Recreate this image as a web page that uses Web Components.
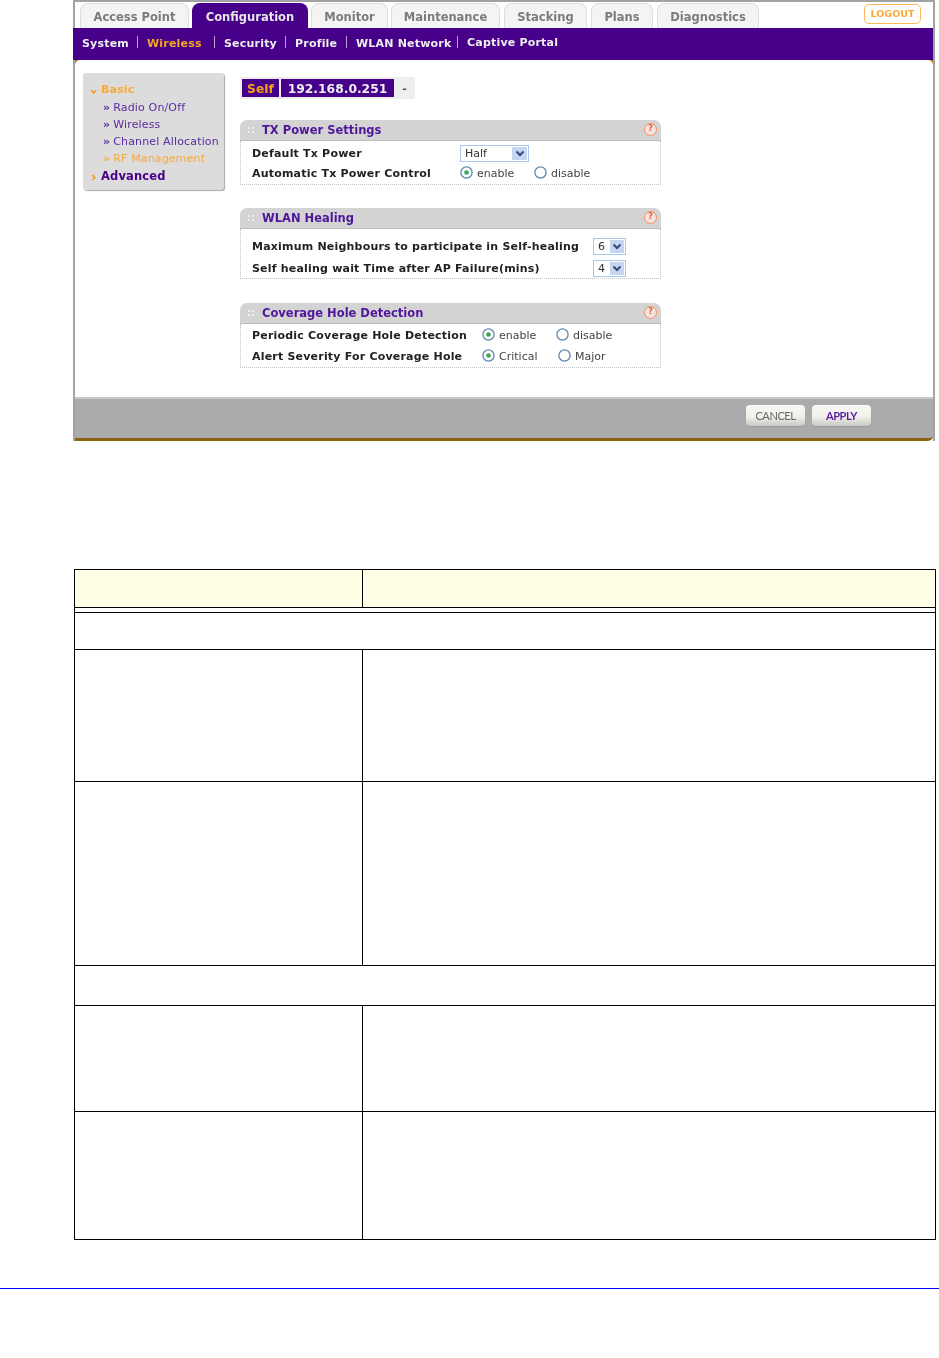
<!DOCTYPE html>
<html>
<head>
<meta charset="utf-8">
<title>RF Management</title>
<style>
  html, body { margin: 0; padding: 0; background: #fff; }
  body { font-family: "DejaVu Sans", Verdana, sans-serif; }
</style>
</head>
<body>
<manual-page>
  <shot-frame>
    <side-menu slot="side"></side-menu>
    <ip-picker></ip-picker>
    <net-panel title="TX Power Settings" style="--body:44px; margin-top:21px">
      <net-row label="Default Tx Power" style="--lw:208px; height:24px">
        <net-select value="Half" style="--w:69px; --field:50px"></net-select>
      </net-row>
      <net-row label="Automatic Tx Power Control" style="--lw:208px; height:16px">
        <net-radio checked style="width:74px">enable</net-radio>
        <net-radio>disable</net-radio>
      </net-row>
    </net-panel>
    <net-panel title="WLAN Healing" style="--body:50px; --pad:5px; margin-top:23px">
      <net-row label="Maximum Neighbours to participate in Self-healing" style="--lw:341px; height:24px">
        <net-select value="6" style="--w:33px; --field:15px"></net-select>
      </net-row>
      <net-row label="Self healing wait Time after AP Failure(mins)" style="--lw:341px; height:20px">
        <net-select value="4" style="--w:33px; --field:15px"></net-select>
      </net-row>
    </net-panel>
    <net-panel title="Coverage Hole Detection" style="--body:44px; margin-top:24px">
      <net-row label="Periodic Coverage Hole Detection" style="--lw:230px; height:23px">
        <net-radio checked style="width:74px">enable</net-radio>
        <net-radio>disable</net-radio>
      </net-row>
      <net-row label="Alert Severity For Coverage Hole" style="--lw:230px; height:18px">
        <net-radio checked style="width:76px">Critical</net-radio>
        <net-radio>Major</net-radio>
      </net-row>
    </net-panel>
  </shot-frame>
  <doc-table></doc-table>
</manual-page>

<script>
const chevron = (c) => `<svg width="10" height="7" viewBox="0 0 10 7"><path d="M1.5 1.5 L5 5 L8.5 1.5" fill="none" stroke="${c}" stroke-width="2"/></svg>`;

class ManualPage extends HTMLElement {
  constructor() {
    super();
    this.attachShadow({ mode: "open" }).innerHTML = `
    <style>
      :host { display: block; width: 939px; height: 1358px; overflow: hidden; }
      .rule { height: 1px; background: #0000ff; margin-top: 48px; }
    </style>
    <slot></slot>
    <div class="rule"></div>`;
  }
}

class ShotFrame extends HTMLElement {
  constructor() {
    super();
    this.attachShadow({ mode: "open" }).innerHTML = `
    <style>
      :host { display: block; width: 862px; height: 441px; margin-left: 73px; box-sizing: border-box;
        border: solid #a2a2a2; border-width: 2px 2px 0 2px; background: #fff; filter: blur(.35px);
        font-family: "DejaVu Sans", Verdana, sans-serif; }
      .tabs { height: 26px; display: flex; align-items: flex-end; padding-left: 5px; position: relative; }
      .logout { position: absolute; left: 789px; top: 2px; width: 57px; height: 20px; box-sizing: border-box;
        border: 1.5px solid #fbb65a; border-radius: 5px; color: #f9a93c; font: bold 9.5px/18px "DejaVu Sans", sans-serif;
        text-align: center; }
      nav { height: 32px; background: #46008a; display: flex; align-items: center; margin-left: -2px; padding-left: 9px; padding-bottom: 2px; box-sizing: border-box;
        font: bold 11px "DejaVu Sans", sans-serif; letter-spacing: .2px; color: #eee; white-space: nowrap; }
      nav span { display: block; }
      nav i { display: block; width: 1px; height: 12px; background: #b9a3d6; margin-top: -3px; }
      .on { color: #f7a51d; }
      .under { background: #a8760f; height: 337px; }
      .content { background: #fff; height: 337px; border-radius: 5px 5px 0 0; box-sizing: border-box;
        display: flex; padding: 13px 0 0 8px; gap: 16px; }
      .main { width: 421px; padding-top: 4px; }
      .foot { height: 44px; box-sizing: border-box; background: #ababab; border-top: 2px solid #c8c8c8; border-bottom: 3px solid #8a6410;
        border-radius: 0 0 5px 0; display: flex; justify-content: flex-end; gap: 7px; padding: 6px 62px 0 0; }
      button { width: 59px; height: 21px; border: 0; padding: 0; border-radius: 4px;
        background: linear-gradient(#f8f8f4, #f1f0ea 55%, #c9c8c2); box-shadow: 0 1px 1px #999;
        font: 11px "Lato", sans-serif; letter-spacing: -.4px; color: #666; }
      button.apply { color: #5a1ea0; font-weight: bold; }
    </style>
    <div class="tabs">
      <net-tab style="width:109px">Access Point</net-tab>
      <net-tab active style="width:116px;margin-left:3px">Configuration</net-tab>
      <net-tab style="width:77px;margin-left:3px">Monitor</net-tab>
      <net-tab style="width:109px;margin-left:3px">Maintenance</net-tab>
      <net-tab style="width:83px;margin-left:4px">Stacking</net-tab>
      <net-tab style="width:62px;margin-left:4px">Plans</net-tab>
      <net-tab style="width:102px;margin-left:4px">Diagnostics</net-tab>
      <div class="logout">LOGOUT</div>
    </div>
    <nav>
      <span style="width:55px">System</span><i></i>
      <span class="on" style="width:67px;margin-left:9px">Wireless</span><i></i>
      <span style="width:61px;margin-left:9px">Security</span><i></i>
      <span style="width:51px;margin-left:9px">Profile</span><i></i>
      <span style="width:101px;margin-left:9px">WLAN Network</span><i></i>
      <span style="margin-left:9px;margin-top:-2px">Captive Portal</span>
    </nav>
    <div class="under"><div class="content">
      <slot name="side"></slot>
      <div class="main"><slot></slot></div>
    </div></div>
    <div class="foot"><button>CANCEL</button><button class="apply">APPLY</button></div>`;
  }
}

class NetTab extends HTMLElement {
  constructor() {
    super();
    this.attachShadow({ mode: "open" }).innerHTML = `
    <style>
      :host { display: block; height: 25px; box-sizing: border-box; border-radius: 8px 8px 0 0;
        background: #f4f4f4; border: 1px solid #dedede; border-bottom: 0; color: #7b7b7b;
        font: bold 11.5px/26px "DejaVu Sans", sans-serif; text-align: center; }
      :host([active]) { background: #46008a; border-color: #46008a; color: #e6e6e6; }
    </style><slot></slot>`;
  }
}

class SideMenu extends HTMLElement {
  constructor() {
    super();
    this.attachShadow({ mode: "open" }).innerHTML = `
    <style>
      :host { display: block; width: 141px; height: 117px; box-sizing: border-box; background: #dcdcdc;
        border-radius: 3px; box-shadow: 1px 1px 1px #aaa; padding-top: 8px; color: #5a2aa0;
        font: 11px/17px "DejaVu Sans", sans-serif; letter-spacing: .15px; white-space: nowrap; }
      .head { font-weight: bold; padding-left: 18px; position: relative; height: 18px; }
      .head svg { position: absolute; left: 7px; top: 7px; }
      .item { padding-left: 20px; }
      .item::before { content: "\\00bb"; margin-right: 3px; font-weight: bold; }
      .or { color: #f7a93a; }
      .dk { color: #46008a; font-size: 11.5px; line-height: 19px; }
    </style>
    <div class="head or"><svg width="7" height="7" viewBox="0 0 7 7"><path d="M1 2 L3.5 5 L6 2" fill="none" stroke="#f39a1c" stroke-width="1.5"/></svg>Basic</div>
    <div class="item">Radio On/Off</div>
    <div class="item">Wireless</div>
    <div class="item">Channel Allocation</div>
    <div class="item or">RF Management</div>
    <div class="head dk"><svg width="7" height="7" viewBox="0 0 7 7"><path d="M2 1 L5 3.5 L2 6" fill="none" stroke="#f39a1c" stroke-width="1.5"/></svg>Advanced</div>`;
  }
}

class IpPicker extends HTMLElement {
  constructor() {
    super();
    this.attachShadow({ mode: "open" }).innerHTML = `
    <style>
      :host { display: flex; width: 175px; height: 22px; box-sizing: border-box; background: #eeeeee; padding: 2px 0 0 2px;
        font: bold 12.3px/20px "DejaVu Sans", sans-serif; color: #efefef; }
      div { height: 18px; background: #46008a; text-align: center; }
      .self { width: 37px; color: #f5a01a; margin-right: 2px; }
      .ip { width: 113px; }
      .dash { width: 21px; background: none; color: #555; font-size: 11px; }
    </style>
    <div class="self">Self</div><div class="ip">192.168.0.251</div><div class="dash">-</div>`;
  }
}

class NetPanel extends HTMLElement {
  constructor() {
    super();
    this.attachShadow({ mode: "open" }).innerHTML = `
    <style>
      :host { display: block; width: 421px; }
      header { height: 20px; background: #d3d3d3; border-bottom: 1px solid #bdbdbd; box-sizing: content-box;
        border-radius: 7px 7px 0 0; display: flex; align-items: center; position: relative;
        font: bold 11.5px "DejaVu Sans", sans-serif; color: #4f169c; }
      .grip { margin: 0 8px 0 8px; }
      .help { position: absolute; right: 4px; top: 3px; width: 13px; height: 13px; box-sizing: border-box;
        border: 1.5px solid #ff8a5c; border-radius: 50%; background: #f0e6df; color: #e8622c;
        font: bold 8px/10px "DejaVu Sans", sans-serif; text-align: center; }
      .body { height: var(--body); box-sizing: border-box; border: dotted #c4c4c4; border-width: 0 1px 1px 1px;
        padding: var(--pad, 0) 0 0 11px; }
    </style>
    <header>
      <svg class="grip" width="6" height="6" viewBox="0 0 6 6" fill="#eee"><rect width="2" height="2"/><rect x="4" width="2" height="2"/><rect y="4" width="2" height="2"/><rect x="4" y="4" width="2" height="2"/></svg>
      <span id="t"></span><div class="help">?</div>
    </header>
    <div class="body"><slot></slot></div>`;
    this.shadowRoot.getElementById("t").textContent = this.getAttribute("title");
    this.removeAttribute("title");
  }
}

class NetRow extends HTMLElement {
  constructor() {
    super();
    this.attachShadow({ mode: "open" }).innerHTML = `
    <style>
      :host { display: flex; align-items: center; }
      .l { width: var(--lw); font: bold 11px "DejaVu Sans", sans-serif; letter-spacing: .2px; color: #222; white-space: nowrap; flex: none; }
    </style>
    <div class="l"></div><slot></slot>`;
    this.shadowRoot.querySelector(".l").textContent = this.getAttribute("label");
  }
}

class NetSelect extends HTMLElement {
  constructor() {
    super();
    this.attachShadow({ mode: "open" }).innerHTML = `
    <style>
      :host { display: flex; width: var(--w); height: 17px; box-sizing: border-box; border: 1px solid #a8c8f0; background: #fff;
        font: 11px/15px "DejaVu Sans", sans-serif; color: #333; }
      .v { width: var(--field); padding-left: 4px; box-sizing: border-box; }
      .a { flex: 1; margin: 1px; background: #c6d5f2; display: flex; align-items: center; justify-content: center; }
    </style>
    <div class="v"></div><div class="a">${chevron("#34487a")}</div>`;
    this.shadowRoot.querySelector(".v").textContent = this.getAttribute("value");
  }
}

class NetRadio extends HTMLElement {
  constructor() {
    super();
    this.attachShadow({ mode: "open" }).innerHTML = `
    <style>
      :host { display: flex; align-items: center; gap: 4px; font: 11px "DejaVu Sans", sans-serif; color: #444; flex: none; }
      svg { margin-top: -2px; }
    </style>
    <svg width="13" height="13" viewBox="0 0 13 13">
      <circle cx="6.5" cy="6.5" r="5.6" fill="#fff" stroke="#5f86ad" stroke-width="1.3"/>
      ${this.hasAttribute("checked") ? '<circle cx="6.5" cy="6.5" r="2.3" fill="#3aa655"/>' : ""}
    </svg><slot></slot>`;
  }
}

class DocTable extends HTMLElement {
  constructor() {
    super();
    this.attachShadow({ mode: "open" }).innerHTML = `
    <style>
      :host { display: block; margin: 128px 0 0 74px; width: 862px; }
      table { border-collapse: collapse; table-layout: fixed; width: 862px; }
      td { border: 1px solid #000; padding: 0; }
      .a { width: 287px; }
      .h td { background: #ffffe5; }
    </style>
    <table>
      <tr class="h" style="height:38px"><td class="a"></td><td></td></tr>
      <tr style="height:5px"><td colspan="2"></td></tr>
      <tr style="height:37px"><td colspan="2"></td></tr>
      <tr style="height:132px"><td></td><td></td></tr>
      <tr style="height:184px"><td></td><td></td></tr>
      <tr style="height:40px"><td colspan="2"></td></tr>
      <tr style="height:106px"><td></td><td></td></tr>
      <tr style="height:128px"><td></td><td></td></tr>
    </table>`;
  }
}

customElements.define("manual-page", ManualPage);
customElements.define("shot-frame", ShotFrame);
customElements.define("net-tab", NetTab);
customElements.define("side-menu", SideMenu);
customElements.define("ip-picker", IpPicker);
customElements.define("net-panel", NetPanel);
customElements.define("net-row", NetRow);
customElements.define("net-select", NetSelect);
customElements.define("net-radio", NetRadio);
customElements.define("doc-table", DocTable);
</script>
</body>
</html>
